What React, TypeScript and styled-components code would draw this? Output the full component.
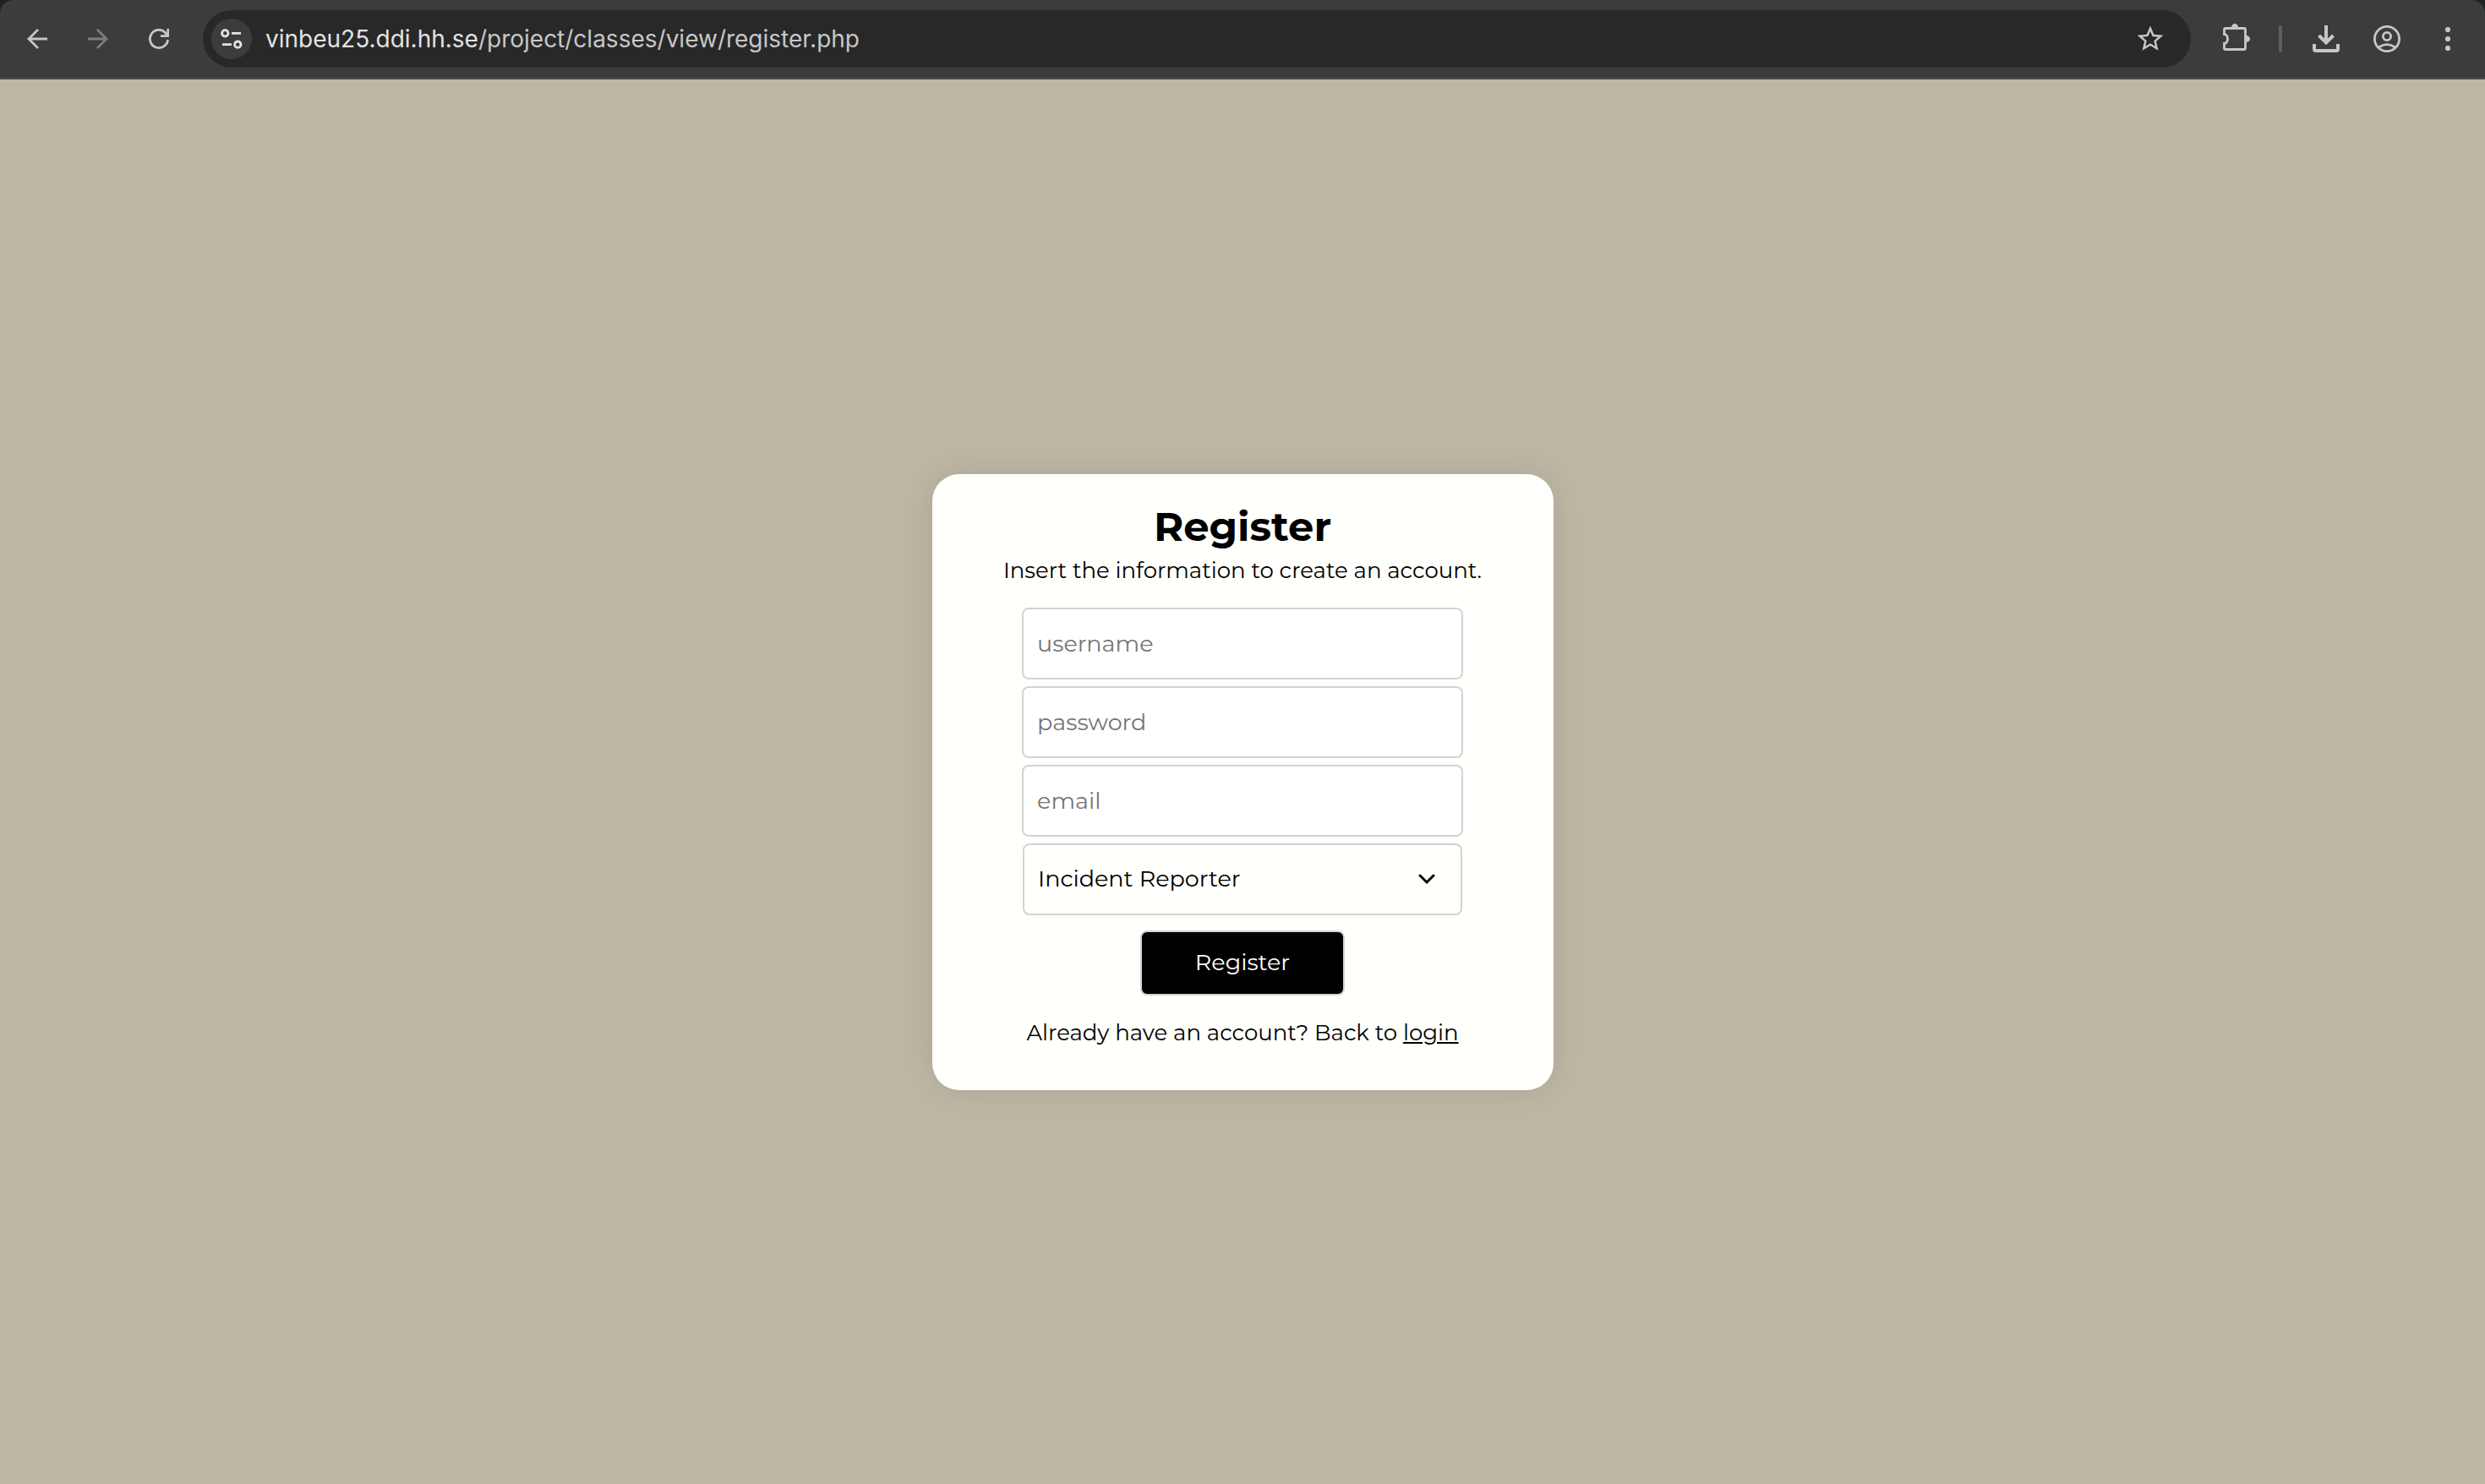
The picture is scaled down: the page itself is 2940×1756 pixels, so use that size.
import React from "react";
import styled, { createGlobalStyle, css } from "styled-components";

const pageFont = `Montserrat, Inter, "Open Sans", sans-serif`;
const chromeFont = `Inter, Roboto, sans-serif`;

const GlobalStyle = createGlobalStyle`
  *, *::before, *::after { box-sizing: border-box; }
  body { margin: 0; background: #bdb7a4; }
`;

const Window = styled.div`
  min-height: 100vh;
  display: flex;
  flex-direction: column;
  background: #bdb7a4;
`;

const ToolbarFrame = styled.header`
  background: #1f2322;
`;

const Toolbar = styled.div`
  display: flex;
  align-items: center;
  gap: 24px;
  padding: 12px 16px;
  background: #3c3c3c;
  border-bottom: 2px solid #484848;
  border-radius: 16px 16px 0 0;
`;

const ButtonGroup = styled.div`
  display: flex;
  align-items: center;
  gap: 16px;
`;

const IconButton = styled.button<{ $muted?: boolean }>`
  display: grid;
  place-items: center;
  width: 56px;
  height: 56px;
  padding: 0;
  border: 0;
  border-radius: 50%;
  background: transparent;
  color: ${(p) => (p.$muted ? "#7d7d7d" : "#c7c7c7")};
`;

const SiteButton = styled(IconButton)`
  width: 48px;
  height: 48px;
  background: #3c3c3c;
  color: #e3e3e3;
`;

const Divider = styled.span`
  width: 4px;
  height: 32px;
  margin: 0 8px;
  border-radius: 2px;
  background: #5e5e5e;
`;

const AddressBar = styled.div`
  flex: 1;
  display: flex;
  align-items: center;
  gap: 16px;
  height: 68px;
  padding: 0 20px 0 10px;
  border-radius: 34px;
  background: #282828;
`;

const Url = styled.span`
  flex: 1;
  font: 400 28px/36px ${chromeFont};
  color: #c7c7c7;
`;

const Host = styled.span`
  color: #e3e3e3;
`;

const Main = styled.main`
  flex: 1;
  display: flex;
  align-items: center;
  justify-content: center;
`;

const Card = styled.section`
  display: flex;
  flex-direction: column;
  align-items: center;
  width: 25%;
  min-width: 640px;
  padding: 32px 0 52px;
  border-radius: 32px;
  background: #fffffc;
  box-shadow: 0 0 40px rgba(0, 0, 0, 0.1);
  font-family: ${pageFont};
  color: #000;
`;

const Title = styled.h1`
  margin: 0;
  font-size: 48px;
  font-weight: 700;
  line-height: 60px;
`;

const Text = styled.p`
  margin: 0;
  font-size: 26px;
  line-height: 32px;
`;

const Form = styled.form`
  display: flex;
  flex-direction: column;
  gap: 8px;
  width: 71%;
  margin: 28px 0;
`;

const Intro = styled(Text)`
  margin-top: 6px;
`;

const fieldBox = css`
  width: 100%;
  height: 85px;
  padding: 0 16px;
  border: 2px solid #d3d3d3;
  border-radius: 8px;
  font: 400 27px/32px ${pageFont};
  color: #000;
`;

const Input = styled.input`
  ${fieldBox}
  background: #fff;
  &::placeholder {
    color: #757575;
    opacity: 1;
  }
`;

const SelectWrap = styled.div`
  position: relative;
  margin: 0 1px;
`;

const Select = styled.select`
  ${fieldBox}
  display: block;
  appearance: none;
  background: #fffffc;
`;

const Chevron = styled.svg`
  position: absolute;
  right: 32px;
  top: 50%;
  margin-top: -10px;
  pointer-events: none;
`;

const Submit = styled.button`
  align-self: center;
  min-width: 242px;
  height: 77px;
  margin-top: 10px;
  border: 2px solid #d3d3d3;
  border-radius: 8px;
  background: #000;
  font: 400 27px/32px ${pageFont};
  color: #fff;
`;

const Link = styled.a`
  color: inherit;
  text-decoration: underline;
`;

function Icon({ children, viewBox = "0 0 40 40" }: { children: React.ReactNode; viewBox?: string }) {
  return (
    <svg width="40" height="40" viewBox={viewBox} fill="none" stroke="currentColor" strokeWidth="2.8" aria-hidden="true">
      {children}
    </svg>
  );
}

const textFields = [
  { id: "username", type: "text" },
  { id: "password", type: "password" },
  { id: "email", type: "email" },
];

export default function App() {
  return (
    <Window>
      <GlobalStyle />
      <ToolbarFrame>
        <Toolbar>
          <ButtonGroup>
            <IconButton aria-label="Back">
              <Icon>
                <path d="M32 20H10M21 9L10 20L21 31" />
              </Icon>
            </IconButton>
            <IconButton aria-label="Forward" $muted>
              <Icon>
                <path d="M8 20H30M19 9L30 20L19 31" />
              </Icon>
            </IconButton>
            <IconButton aria-label="Reload">
              <Icon>
                <path d="M30.6 21A10.6 10.6 0 1 1 27.8 12.8L30 15.6" />
                <path d="M29.3 8H32V18H22V15.3H26.5L29.3 12.5Z" fill="currentColor" stroke="none" />
              </Icon>
            </IconButton>
          </ButtonGroup>
          <AddressBar>
            <SiteButton aria-label="Site information">
              <Icon>
                <circle cx="12.3" cy="13.3" r="3.7" />
                <path d="M20 13.3H31M9 26.7H20" />
                <circle cx="27.3" cy="26.7" r="3.7" />
              </Icon>
            </SiteButton>
            <Url>
              <Host>vinbeu25.ddi.hh.se</Host>/project/classes/view/register.php
            </Url>
            <IconButton aria-label="Bookmark this page">
              <Icon viewBox="-1 -1 26 26">
                <path
                  fill="currentColor"
                  stroke="none"
                  d="M22 9.24l-7.19-.62L12 2 9.19 8.63 2 9.24l5.46 4.73L5.82 21 12 17.27 18.18 21l-1.63-7.03L22 9.24zM12 15.4l-3.76 2.27 1-4.28-3.32-2.88 4.38-.38L12 6.1l1.71 4.04 4.38.38-3.32 2.88 1 4.28L12 15.4z"
                />
              </Icon>
            </IconButton>
          </AddressBar>
          <ButtonGroup>
            <IconButton aria-label="Extensions">
              <Icon>
                <path d="M7.5 14.5V9Q7.5 7.5 9 7.5H31Q32.5 7.5 32.5 9V31Q32.5 32.5 31 32.5H9Q7.5 32.5 7.5 31V25.5A4 5.5 0 0 0 7.5 14.5Z" />
                <path d="M16 6.5A4 4.5 0 0 1 24 6.5ZM33.5 16A4.5 4 0 0 1 33.5 24Z" fill="currentColor" stroke="none" />
              </Icon>
            </IconButton>
            <Divider />
            <IconButton aria-label="Downloads">
              <Icon>
                <path strokeWidth="4" d="M6 26V32Q6 34 8 34H32Q34 34 34 32V26M20 4V24M11.5 16L20 24.5L28.5 16" />
              </Icon>
            </IconButton>
            <IconButton aria-label="Profile">
              <Icon>
                <circle cx="20" cy="20" r="14.6" />
                <circle cx="20" cy="17" r="4.6" />
                <path d="M10.3 30Q20 23.2 29.7 30" />
              </Icon>
            </IconButton>
            <IconButton aria-label="Menu">
              <Icon>
                <g fill="currentColor" stroke="none">
                  <circle cx="20" cy="9" r="3.1" />
                  <circle cx="20" cy="20" r="3.1" />
                  <circle cx="20" cy="31" r="3.1" />
                </g>
              </Icon>
            </IconButton>
          </ButtonGroup>
        </Toolbar>
      </ToolbarFrame>
      <Main>
        <Card>
          <Title>Register</Title>
          <Intro>Insert the information to create an account.</Intro>
          <Form onSubmit={(e) => e.preventDefault()}>
            {textFields.map((f) => (
              <Input key={f.id} id={f.id} name={f.id} type={f.type} placeholder={f.id} aria-label={f.id} />
            ))}
            <SelectWrap>
              <Select id="role" name="role" aria-label="role">
                <option>Incident Reporter</option>
              </Select>
              <Chevron width="20" height="20" viewBox="0 0 20 20" fill="none" stroke="#000" strokeWidth="3" strokeLinecap="round" aria-hidden="true">
                <path d="M2 6L10 14L18 6" />
              </Chevron>
            </SelectWrap>
            <Submit type="submit">Register</Submit>
          </Form>
          <Text>
            Already have an account? Back to <Link href="#login">login</Link>
          </Text>
        </Card>
      </Main>
    </Window>
  );
}
